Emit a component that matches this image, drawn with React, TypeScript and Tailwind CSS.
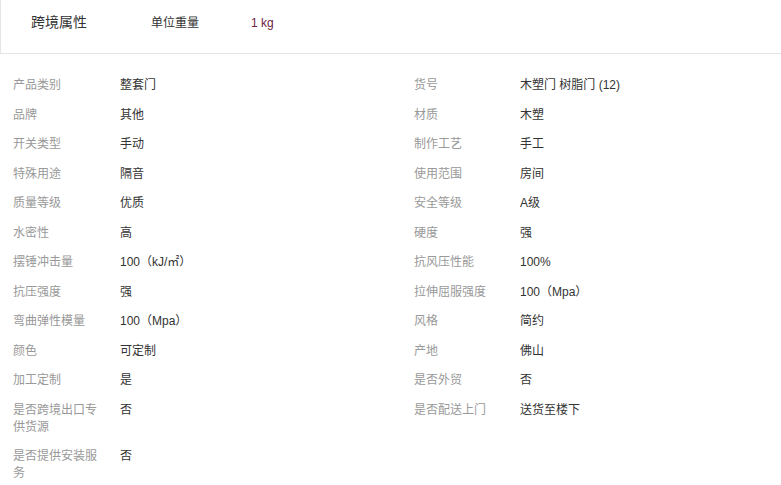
import React from 'react'

const left: [string, string][] = [
  ['产品类别', '整套门'],
  ['品牌', '其他'],
  ['开关类型', '手动'],
  ['特殊用途', '隔音'],
  ['质量等级', '优质'],
  ['水密性', '高'],
  ['摆锤冲击量', '100（kJ/㎡）'],
  ['抗压强度', '强'],
  ['弯曲弹性模量', '100（Mpa）'],
  ['颜色', '可定制'],
  ['加工定制', '是'],
  ['是否跨境出口专供货源', '否'],
  ['是否提供安装服务', '否'],
]

const right: [string, string][] = [
  ['货号', '木塑门 树脂门 (12)'],
  ['材质', '木塑'],
  ['制作工艺', '手工'],
  ['使用范围', '房间'],
  ['安全等级', 'A级'],
  ['硬度', '强'],
  ['抗风压性能', '100%'],
  ['拉伸屈服强度', '100（Mpa）'],
  ['风格', '简约'],
  ['产地', '佛山'],
  ['是否外贸', '否'],
  ['是否配送上门', '送货至楼下'],
]

function AttrRow({ label, value, labelW }: { label: string; value: string; labelW: string }) {
  return (
    <div className="flex text-[12px] leading-[17px] mb-[12.5px]">
      <div className={`${labelW} shrink-0 text-[#999]`}>{label}</div>
      <div className="text-[#333]">{value}</div>
    </div>
  )
}

export default function App() {
  return (
    <div
      className="w-[781px] h-[485px] bg-white overflow-hidden"
      style={{ fontFamily: '"Liberation Sans", "Noto Sans CJK SC", sans-serif' }}
    >
      {/* Header */}
      <div className="h-[54px] border-l border-b border-[#e5e5e5] flex items-center pb-[8px]">
        <div className="ml-[30px] w-[120px] text-[14px] text-[#333]">跨境属性</div>
        <div className="w-[100px] text-[12px] text-[#333]">单位重量</div>
        <div className="text-[12px] text-[#6e2343]">1 kg</div>
      </div>

      {/* Attributes */}
      <div className="flex pl-[13px] pt-[23px]">
        <div className="w-[401px]">
          {left.map(([l, v]) => (
            <AttrRow key={l} label={l} value={v} labelW="w-[90px] mr-[17px]" />
          ))}
        </div>
        <div className="flex-1">
          {right.map(([l, v]) => (
            <AttrRow key={l} label={l} value={v} labelW="w-[90px] mr-[16px]" />
          ))}
        </div>
      </div>
    </div>
  )
}
